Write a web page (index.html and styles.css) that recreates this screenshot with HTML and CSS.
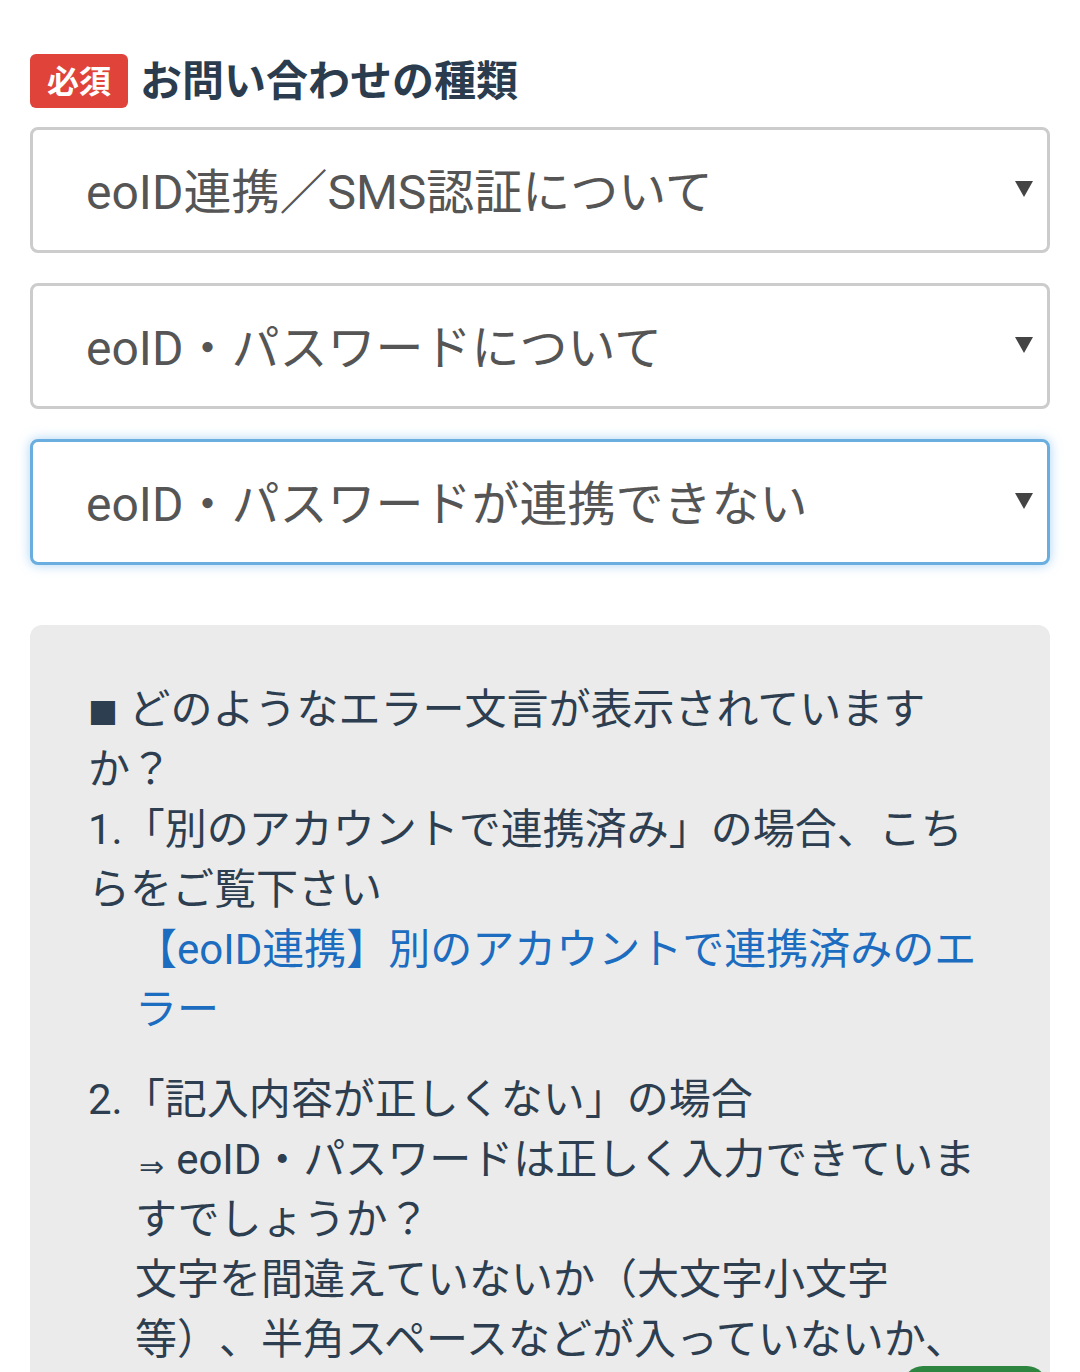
FILE: index.html
```html
<!DOCTYPE html>
<html lang="ja">
<head>
<meta charset="utf-8">
<title>お問い合わせの種類</title>
<link rel="stylesheet" href="styles.css">
</head>
<body>
<div class="page">
  <div class="field-head">
    <span class="badge">必須</span>
    <h2 class="field-title">お問い合わせの種類</h2>
  </div>
  <div class="selects">
    <div class="select">
      <span class="select-text">eoID連携／SMS認証について</span>
      <svg class="caret" width="18" height="16" viewBox="0 0 18 16"><path d="M0 0H18L9 16Z" fill="#444"/></svg>
    </div>
    <div class="select">
      <span class="select-text">eoID・パスワードについて</span>
      <svg class="caret" width="18" height="16" viewBox="0 0 18 16"><path d="M0 0H18L9 16Z" fill="#444"/></svg>
    </div>
    <div class="select select-focus">
      <span class="select-text">eoID・パスワードが連携できない</span>
      <svg class="caret" width="18" height="16" viewBox="0 0 18 16"><path d="M0 0H18L9 16Z" fill="#444"/></svg>
    </div>
  </div>
  <div class="info">
    <p class="info-p"><span class="square">■</span> どのようなエラー文言が表示されていますか？</p>
    <p class="info-p">1.「別のアカウントで連携済み」の場合、こちらをご覧下さい</p>
    <a class="info-link" href="#">【eoID連携】別のアカウントで連携済みのエラー</a>
    <p class="info-p item">2.「記入内容が正しくない」の場合</p>
    <p class="info-p indent"><span class="arrow">⇒</span>eoID・パスワードは正しく入力できていますでしょうか？<br>文字を間違えていないか（大文字小文字等）、半角スペースなどが入っていないか、ご確認ください。</p>
  </div>
</div>
<div class="float-btn"></div>
</body>
</html>
```
FILE: styles.css
```css
html, body {
  margin: 0;
  padding: 0;
  background: #ffffff;
}
body {
  font-family: Roboto, "Noto Sans CJK JP", sans-serif;
  color: #2c3e50;
  text-spacing-trim: space-all;
}
.page {
  padding: 54px 30px 0 30px;
}
.field-head {
  display: flex;
  align-items: center;
  gap: 12px;
  height: 54px;
}
.badge {
  display: flex;
  align-items: center;
  justify-content: center;
  width: 98px;
  height: 54px;
  box-sizing: border-box;
  padding-bottom: 5px;
  background: #e0433a;
  color: #ffffff;
  font-family: "Noto Sans CJK JP", sans-serif;
  font-weight: 700;
  font-size: 32px;
  line-height: 40px;
  border-radius: 6px;
}
.field-title {
  margin: 0;
  padding-bottom: 6px;
  font-family: "Noto Sans CJK JP", sans-serif;
  font-weight: 700;
  font-size: 42px;
  line-height: 54px;
  color: #2a3c4e;
}
.selects {
  margin-top: 19px;
  display: flex;
  flex-direction: column;
  gap: 30px;
}
.select {
  height: 126px;
  box-sizing: border-box;
  border: 3px solid #cccccc;
  border-radius: 8px;
  background: #ffffff;
  display: flex;
  align-items: center;
  justify-content: space-between;
  padding: 0 14px 4px 53px;
}
.select-focus {
  border-color: #6aaee0;
  box-shadow: 0 0 12px rgba(102, 175, 233, 0.55);
}
.select-text {
  font-size: 48px;
  color: #555555;
  white-space: nowrap;
}
.caret {
  display: block;
  flex: none;
  margin-top: 2px;
}
.info {
  margin-top: 60px;
  background: #ebebeb;
  border-radius: 12px;
  padding: 55px 58px 60px 58px;
  font-size: 42px;
  line-height: 60px;
}
.info-p {
  margin: 0;
}
.square {
  font-family: "Noto Sans CJK JP", sans-serif;
  font-size: 30px;
  line-height: 1;
}
.item {
  margin-top: 30px;
}
.indent {
  margin-left: 47px;
}
.info-link {
  display: block;
  margin-left: 47px;
  color: #1c6cc0;
  text-decoration: none;
}
.arrow {
  font-family: "DejaVu Sans", sans-serif;
  font-size: 30px;
  line-height: 1;
  margin: 0 12px 0 4px;
  vertical-align: -3px;
}
.float-btn {
  position: fixed;
  right: 33px;
  bottom: -40px;
  width: 144px;
  height: 46px;
  background: #2e8540;
  border-radius: 20px;
}
```
